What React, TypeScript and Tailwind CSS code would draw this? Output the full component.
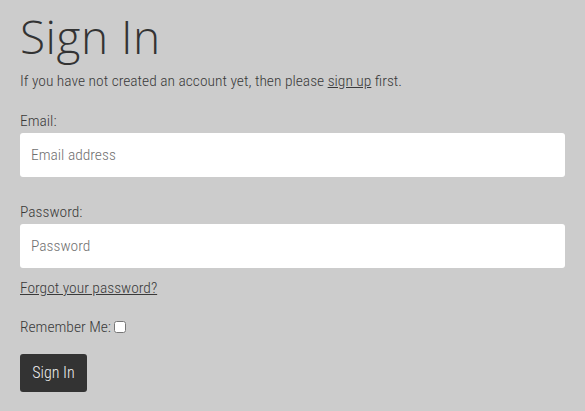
import React from 'react';

const body = { fontFamily: '"Liberation Sans Narrow", "Roboto Condensed", Roboto, sans-serif' };

const App: React.FC = () => {
  return (
    <div className="min-h-screen w-full bg-[#cccccc] text-[#333333] font-light" style={body}>
      <div className="px-5 pt-[8px]">
        <h1
          className="text-[46px] leading-[56px] font-light text-[#333333] tracking-[0.5px]"
          style={{ fontFamily: '"Open Sans", sans-serif' }}
        >
          Sign In
        </h1>
        <p className="mt-[5px] text-[15.5px] leading-6 text-[#3a3a3a]">
          If you have not created an account yet, then please <a href="#" className="underline">sign up</a> first.
        </p>

        <form className="mt-[16px]">
          <label className="block text-[15.5px] leading-6 text-[#3a3a3a]">Email:</label>
          <input
            type="email"
            placeholder="Email address"
            className="block w-full h-[44px] rounded-[3px] bg-white px-[11px] text-[15.5px] text-[#333] placeholder:text-[#707070] outline-none"
          />

          <label className="mt-[23px] block text-[15.5px] leading-6 text-[#3a3a3a]">Password:</label>
          <input
            type="password"
            placeholder="Password"
            className="block w-full h-[44px] rounded-[3px] bg-white px-[11px] text-[15.5px] text-[#333] placeholder:text-[#707070] outline-none"
          />

          <div className="mt-[8px]">
            <a href="#" className="text-[15.5px] leading-6 underline text-[#3a3a3a]">Forgot your password?</a>
          </div>

          <div className="mt-[15px] flex items-center gap-[3px] text-[15.5px] leading-6 text-[#3a3a3a]">
            <span>Remember Me:</span>
            <input type="checkbox" className="w-[12px] h-[12px] m-0" />
          </div>

          <button
            type="button"
            className="mt-[15px] h-[38px] w-[67px] rounded-[3px] bg-[#333333] text-[16px] font-light text-[#f0f0f0]"
          >
            Sign In
          </button>
        </form>
      </div>
    </div>
  );
};

export default App;
